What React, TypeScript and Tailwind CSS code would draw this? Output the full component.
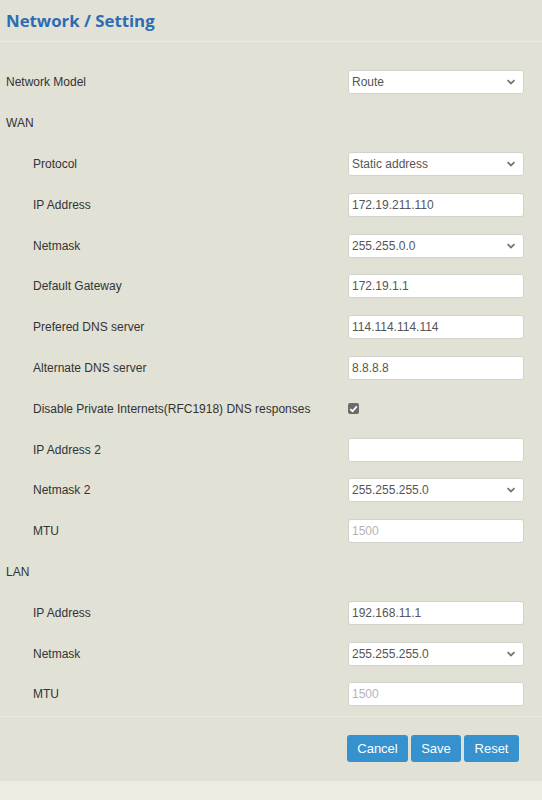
import React from 'react';

type Row =
  | { kind: 'section'; label: string }
  | { kind: 'select'; label: string; value: string; indent?: boolean }
  | { kind: 'input'; label: string; value: string; indent?: boolean; placeholder?: boolean }
  | { kind: 'check'; label: string; indent?: boolean };

const ROWS: Row[] = [
  { kind: 'select', label: 'Network Model', value: 'Route' },
  { kind: 'section', label: 'WAN' },
  { kind: 'select', label: 'Protocol', value: 'Static address', indent: true },
  { kind: 'input', label: 'IP Address', value: '172.19.211.110', indent: true },
  { kind: 'select', label: 'Netmask', value: '255.255.0.0', indent: true },
  { kind: 'input', label: 'Default Gateway', value: '172.19.1.1', indent: true },
  { kind: 'input', label: 'Prefered DNS server', value: '114.114.114.114', indent: true },
  { kind: 'input', label: 'Alternate DNS server', value: '8.8.8.8', indent: true },
  { kind: 'check', label: 'Disable Private Internets(RFC1918) DNS responses', indent: true },
  { kind: 'input', label: 'IP Address 2', value: '', indent: true },
  { kind: 'select', label: 'Netmask 2', value: '255.255.255.0', indent: true },
  { kind: 'input', label: 'MTU', value: '1500', indent: true, placeholder: true },
  { kind: 'section', label: 'LAN' },
  { kind: 'input', label: 'IP Address', value: '192.168.11.1', indent: true },
  { kind: 'select', label: 'Netmask', value: '255.255.255.0', indent: true },
  { kind: 'input', label: 'MTU', value: '1500', indent: true, placeholder: true },
];

function Chevron() {
  return (
    <svg width="10" height="6" viewBox="0 0 10 6" className="text-[#777]">
      <path d="M1.5 1.2 L5 4.5 L8.5 1.2" fill="none" stroke="currentColor" strokeWidth="1.8" />
    </svg>
  );
}

function Field({ row }: { row: Row }) {
  if (row.kind === 'section') return null;
  if (row.kind === 'check') {
    return (
      <div className="flex h-[24px] items-center">
        <span className="flex h-[11px] w-[11px] items-center justify-center rounded-[2px] bg-[#6b6b6b]">
          <svg width="9" height="8" viewBox="0 0 9 8">
            <path d="M1.3 4.2 L3.5 6.2 L7.8 1.4" fill="none" stroke="#fff" strokeWidth="1.7" />
          </svg>
        </span>
      </div>
    );
  }
  const muted = row.kind === 'input' && row.placeholder;
  return (
    <div className="flex h-[24px] w-[176px] items-center justify-between rounded-[3px] border border-[#d2d2cc] bg-white pl-[3px] pr-[7px]">
      <span className={muted ? 'text-[12px] text-[#b4b4b4]' : 'text-[12px] text-[#555]'}>{row.value}</span>
      {row.kind === 'select' && <Chevron />}
    </div>
  );
}

export default function App() {
  return (
    <div className="min-h-[800px] w-[542px] bg-[#e1e1d6] font-['Liberation_Sans',Arial,sans-serif] text-[#333]">
      {/* Header */}
      <div className="flex h-[42px] items-center border-b border-[#ebebe3] px-[6px]">
        <h1 className="font-['Open_Sans',sans-serif] text-[16.8px] font-bold text-[#2b6db3]">Network / Setting</h1>
      </div>

      {/* Form rows */}
      <div className="pt-[20px] pb-[1px]">
        {ROWS.map((row, i) => (
          <div key={i} className="flex h-[40.8px] items-center justify-between pr-[18px]">
            <span className={row.kind !== 'section' && row.indent ? 'pl-[33px] text-[12px]' : 'pl-[6px] text-[12px]'}>
              {row.label}
            </span>
            <div className="w-[176px]">
              <Field row={row} />
            </div>
          </div>
        ))}
      </div>

      {/* Footer actions */}
      <div className="flex h-[65px] items-center justify-end gap-[3px] border-t border-[#ebebe3] pr-[23px]">
        <button className="h-[27px] w-[61px] rounded-[3px] bg-[#3592cf] text-[13px] text-white">Cancel</button>
        <button className="h-[27px] w-[50px] rounded-[3px] bg-[#3592cf] text-[13px] text-white">Save</button>
        <button className="h-[27px] w-[55px] rounded-[3px] bg-[#3592cf] text-[13px] text-white">Reset</button>
      </div>
      <div className="h-[19px] bg-[#ecece3]" />
    </div>
  );
}
